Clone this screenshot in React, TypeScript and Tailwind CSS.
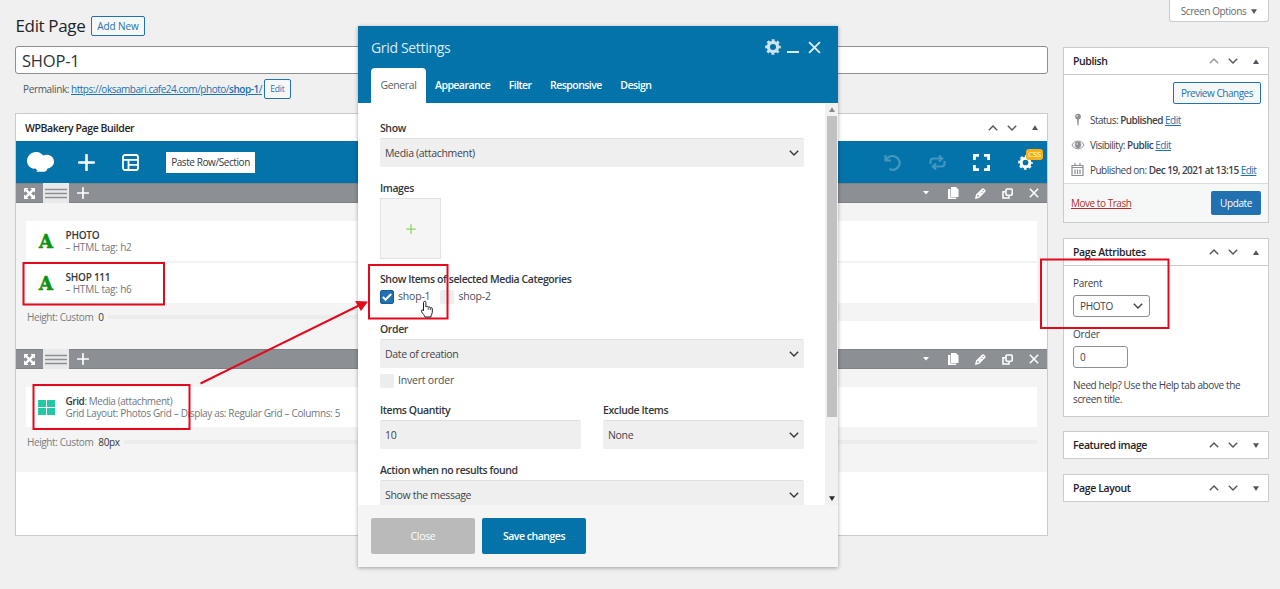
import type { ReactNode } from "react";
import { clsx } from "clsx";

const RED = "#e3091c";

// ---------- icons ----------

function Chevron({ up, className }: { up?: boolean; className?: string }) {
  return (
    <svg width="10" height="6" viewBox="0 0 10 6" fill="none" stroke="currentColor" strokeWidth="1.4" className={className}>
      <path d={up ? "M.8 5.3 5 1.1l4.2 4.2" : "M.8.7 5 4.9 9.2.7"} />
    </svg>
  );
}

function Triangle({ up }: { up?: boolean }) {
  return (
    <svg width="6" height="5" viewBox="0 0 6 5" fill="currentColor">
      <path d={up ? "M3 .2 6 5H0z" : "M0 .2h6L3 5z"} />
    </svg>
  );
}

function Gear({ size, color }: { size: number; color: string }) {
  return (
    <svg width={size} height={size} viewBox="0 0 20 20" fill="none" stroke={color}>
      <circle cx="10" cy="10" r="5.8" strokeWidth="4" />
      <circle cx="10" cy="10" r="8.3" strokeWidth="3" strokeDasharray="3.5 3.02" strokeDashoffset="1.75" />
    </svg>
  );
}

function Cross({ size }: { size: number }) {
  return (
    <svg width={size} height={size} viewBox="0 0 12 12" stroke="currentColor" strokeWidth="1.8">
      <path d="M1 1l10 10M11 1 1 11" />
    </svg>
  );
}

function Plus({ size, width }: { size: number; width: number }) {
  return (
    <svg width={size} height={size} viewBox="0 0 16 16" stroke="currentColor" strokeWidth={width} strokeLinecap="round">
      <path d="M8 1v14M1 8h14" />
    </svg>
  );
}

// ---------- shared bits ----------

function BoxArrows({ open, dim }: { open: boolean; dim?: boolean }) {
  return (
    <div className="flex items-center text-[#50575e]">
      <Chevron up className={clsx("mr-[9px]", dim && "opacity-60")} />
      <Chevron className="mr-[15px]" />
      <Triangle up={open} />
    </div>
  );
}

function MetaBox({ title, open = true, dim, children }: { title: string; open?: boolean; dim?: boolean; children?: ReactNode }) {
  return (
    <section className="border border-[#c9cbce] bg-white">
      <header className={clsx("flex h-[26px] items-center justify-between pl-[9px] pr-[9px]", open && "border-b border-[#c9cbce] box-content")}>
        <h2 className="pt-px text-[10.5px] font-semibold tracking-[-0.38px] text-[#1d2327]">{title}</h2>
        <BoxArrows open={open} dim={dim} />
      </header>
      {children}
    </section>
  );
}

function RowBar() {
  return (
    <div className="flex h-5 items-stretch justify-between border-y border-[#7e8287] bg-[#8c8f94] text-white">
      <div className="flex">
        <div className="flex w-[27px] items-center justify-center">
          <svg width="11" height="11" viewBox="0 0 11 11" fill="currentColor">
            <path d="M0 0h4.5L3.2 1.5l2.3 2.3 2.3-2.3L6.5 0H11v4.5L9.5 3.2 7.2 5.5l2.3 2.3L11 6.5V11H6.5l1.3-1.5-2.3-2.3-2.3 2.3L4.5 11H0V6.5l1.5 1.3 2.3-2.3-2.3-2.3L0 4.5z" />
          </svg>
        </div>
        <div className="-my-px flex w-[26px] items-center justify-center bg-[#e9e9e9]">
          <svg width="22" height="11" viewBox="0 0 22 11" stroke="#8c8f94" strokeWidth="1.4">
            <path d="M0 1.5h22M0 5.5h22M0 9.5h22" />
          </svg>
        </div>
        <div className="flex w-7 items-center justify-center">
          <Plus size={12} width={2.2} />
        </div>
      </div>
      <div className="flex items-center pr-[8px]">
        <svg width="6" height="4" viewBox="0 0 6 4" fill="currentColor" className="mr-[19px]">
          <path d="M0 0h6L3 3.5z" />
        </svg>
        <svg width="11" height="12" viewBox="0 0 11 12" fill="currentColor" className="mr-4">
          <path d="M3 0h5l2.500 2.500v7.500H3z" />
          <path d="M0 2h2.400v8.500h5.800V12H0z" />
        </svg>
        <svg width="11" height="11" viewBox="0 0 11 11" fill="none" stroke="currentColor" strokeWidth="1.5" className="mr-4">
          <path d="M1 10l.7-3L7.5 1.2c.7-.7 2.8 1.3 2.2 2L4 9.2zM6.5 2.5 8.5 4.5M3.5 7.5l3-3" />
        </svg>
        <svg width="11" height="11" viewBox="0 0 11 11" fill="none" stroke="currentColor" strokeWidth="1.6" className="mr-4">
          <rect x="4" y="1" width="6.2" height="6.2" rx="1" />
          <path d="M3.5 3.8H1v6.2h6V7.5" />
        </svg>
        <Cross size={10} />
      </div>
    </div>
  );
}

function TextElement({ title, tag }: { title: string; tag: string }) {
  return (
    <div className="flex h-10 shrink-0 items-center bg-white pl-[13px]">
      <span className="w-[26.5px] pt-px font-['DejaVu_Serif',serif] text-[18px] font-bold leading-none text-[#0c9311] [-webkit-text-stroke:0.6px]">A</span>
      <div className="text-[10px] leading-3">
        <p className="font-semibold tracking-[-0.25px] text-[#32373c]">{title}</p>
        <p className="tracking-[-0.2px] text-[#72777c]">– HTML tag: {tag}</p>
      </div>
    </div>
  );
}

function HeightLine({ value, className }: { value: string; className?: string }) {
  return (
    <div className={clsx("flex h-4 shrink-0 items-center pl-px text-[10px] tracking-[-0.4px] text-[#777c81]", className)}>
      <span>Height: Custom</span>
      <span className="ml-[5px] mr-1 text-[#32373c]">{value}</span>
      <span className="h-1 flex-1 bg-[#ececec]" />
    </div>
  );
}

// ---------- left column ----------

function Toolbar() {
  return (
    <div className="flex h-[42px] items-center bg-[#0473aa] pl-[11px] pr-[14px] text-white">
      <svg width="27" height="20" viewBox="0 0 27 20" fill="currentColor">
        <path d="M9 0c4 0 6 2 7 3.5C21 1.5 27 4 27 9.5c0 4-3 6.5-6.5 7-.5 1.8-1.5 3-3 3.2H10c-.8 0-.5-1 1-1.7C10 18.3 9 17.5 8.5 16.5 4 17.5 0 13.500 0 9c0-5 4-9 9-9z" />
      </svg>
      <span className="ml-6"><Plus size={17} width={2.4} /></span>
      <svg width="17" height="17" viewBox="0 0 17 17" fill="none" stroke="currentColor" strokeWidth="1.8" className="ml-[27px]">
        <rect x="1" y="1" width="15" height="15" rx="2" />
        <path d="M1 5.8h15M6.5 5.8V16M6.5 10.8H16" />
      </svg>
      <button className="ml-[27px] h-[21px] w-[89px] bg-white text-[10px] tracking-[-0.42px] text-[#32373c]">Paste Row/Section</button>
      <div className="ml-auto flex items-center">
        <svg width="17" height="17" viewBox="0 0 17 17" fill="none" stroke="currentColor" strokeWidth="2.2" className="mr-7 opacity-25">
          <path d="M1.5 1v5.5H7M2 6c2-4 6.5-5 10-3s4.8 6 2.6 9.4C12.500 15.6 9 16.4 5.5 15" />
        </svg>
        <svg width="17" height="15" viewBox="0 0 17 15" fill="none" stroke="currentColor" strokeWidth="2.2" className="mr-[27px] opacity-25">
          <path d="M1.5 9V6.5c0-2 1-3 3-3H13M15.5 6v2.5c0 2-1 3-3 3H4M10 .5l3.2 3L10 6.5M7 8.5l-3.2 3 3.2 3" />
        </svg>
        <svg width="17" height="17" viewBox="0 0 17 17" fill="none" stroke="currentColor" strokeWidth="2.8" className="mr-[28px]">
          <path d="M1.4 6V1.4H6M11 1.4h4.6V6M15.6 11v4.6H11M6 15.6H1.4V11" />
        </svg>
        <div className="relative">
          <Gear size={15} color="#fff" />
          <span className="absolute -top-[6px] left-[8px] flex h-[11px] w-[17px] items-center justify-center rounded-[3px] bg-[#fbb013] text-[8px] tracking-[-0.3px]">
            CSS
          </span>
        </div>
      </div>
    </div>
  );
}

function Builder() {
  return (
    <section className="mt-[14px] h-[423px] border border-[#c9cbce] bg-white">
      <header className="flex h-[27px] items-center justify-between pl-[9px] pr-[9px]">
        <h2 className="pt-[2px] text-[10.5px] font-semibold tracking-[-0.42px] text-[#1d2327]">WPBakery Page Builder</h2>
        <BoxArrows open />
      </header>
      <Toolbar />

      {/* heading row */}
      <RowBar />
      <div className="flex h-[118px] flex-col gap-[2px] bg-[#f4f4f4] px-[10px] pt-[18px]">
        <TextElement title="PHOTO" tag="h2" />
        <TextElement title="SHOP 111" tag="h6" />
        <HeightLine value="0" className="mt-[4px] w-[500px]" />
      </div>
      <div className="h-[28px] w-[500px] bg-[#f4f4f4]" />

      {/* grid row */}
      <RowBar />
      <div className="h-[103px] bg-[#f4f4f4] px-[10px] pt-[18px]">
        <div className="flex h-10 items-center bg-white pl-3">
          <svg width="17" height="15" viewBox="0 0 17 15" fill="#22c9a4" className="mr-[10.5px]">
            <path d="M0 0h8v7H0zM9 0h8v7H9zM0 8h8v7H0zM9 8h8v7H9z" />
          </svg>
          <div className="text-[10px] leading-3 tracking-[-0.35px] text-[#72777c]">
            <p className="tracking-[-0.42px]"><span className="font-semibold text-[#32373c]">Grid</span>: Media (attachment)</p>
            <p>Grid Layout: Photos Grid – Display as: Regular Grid – Columns: 5</p>
          </div>
        </div>
        <HeightLine value="80px" className="mt-[7px]" />
      </div>
    </section>
  );
}

function EditorColumn() {
  return (
    <main className="w-[1033px] pt-[15px]">
      <div className="flex h-[21px] items-center">
        <h1 className="w-[76px] pl-[0.5px] text-[17px] tracking-[-0.35px] text-[#1d2327]">Edit Page</h1>
        <button className="h-[20px] w-[54px] rounded-[2px] border border-[#2271b1] bg-[#f6f7f7] pt-px text-[10px] font-medium tracking-[-0.1px] text-[#2271b1]">Add New</button>
      </div>
      <div className="mt-[10px] flex h-7 items-center rounded-[3px] border border-[#8c8f94] bg-white pl-[6px] pt-[2px] text-[16.5px] tracking-[-0.2px] text-[#2c3338]">SHOP-1</div>
      <div className="mt-[5px] flex h-5 items-center pl-2 text-[10px]">
        <span className="w-[48px] font-medium tracking-[-0.35px] text-[#50575e]">Permalink:</span>
        <a className="w-[193px] whitespace-nowrap tracking-[-0.47px] text-[#2271b1] underline">https://oksambari.cafe24.com/photo/<span className="font-semibold">shop-1</span>/</a>
        <button className="h-5 w-[27px] rounded-[2px] border border-[#2271b1] bg-[#f6f7f7] text-[8.5px] tracking-[-0.2px] text-[#2271b1]">Edit</button>
      </div>
      <Builder />
    </main>
  );
}

// ---------- right column ----------

function StatusLine({ icon, label, value }: { icon: ReactNode; label: string; value: string }) {
  return (
    <div className="flex h-[25px] items-center whitespace-nowrap">
      <span className="flex w-[19px] shrink-0 items-center text-[#8c8f94]">{icon}</span>
      <span className="pt-px tracking-[-0.52px]">{label}: <b className="font-semibold">{value}</b> <a className="text-[#2271b1] underline">Edit</a></span>
    </div>
  );
}

function Sidebar() {
  return (
    <aside className="flex w-[206px] flex-col text-[10px] tracking-[-0.38px] text-[#3c434a]">
      <div className="mb-[25px] flex h-[22px] w-[100px] items-center justify-center gap-[5px] self-end rounded-b-[3px] border border-t-0 border-[#c9cbce] bg-white pt-px tracking-[-0.4px] text-[#646970]">
        Screen Options <span className="text-[#50575e]"><Triangle /></span>
      </div>

      <MetaBox title="Publish" dim>
        <div className="px-[7px] pb-[1px] pt-[7px]">
          <button className="mb-[3px] ml-auto block h-[22px] w-[88px] rounded-[2px] border border-[#2271b1] bg-[#f6f7f7] text-[10px] tracking-[-0.47px] text-[#2271b1]">Preview Changes</button>
          <StatusLine
            label="Status"
            value="Published"
            icon={
              <svg width="14" height="13" viewBox="0 0 14 13" fill="currentColor">
                <circle cx="7" cy="3.6" r="2.9" />
                <circle cx="6.2" cy="3" r=".8" fill="#fff" />
                <path d="M6.1 6h1.8l-.4 6.5h-1z" />
              </svg>
            }
          />
          <StatusLine
            label="Visibility"
            value="Public"
            icon={
              <svg width="14" height="10" viewBox="0 0 13 10" fill="none" stroke="currentColor">
                <path d="M.5 5C3-.2 10-.2 12.5 5 10 10 3 10 .5 5z" />
                <circle cx="6.5" cy="4.8" r="2.8" fill="currentColor" />
                <circle cx="5.6" cy="4" r=".8" fill="#fff" stroke="none" />
              </svg>
            }
          />
          <StatusLine
            label="Published on"
            value="Dec 19, 2021 at 13:15"
            icon={
              <svg width="13" height="13" viewBox="0 0 13 13" fill="none" stroke="currentColor" strokeWidth="1.2">
                <path d="M1 2.500h11v10H1zM1 4.500h11M4 0v3M9 0v3M4 6.500v4.500M6.500 6.500v4.500M9 6.500v4.500" />
              </svg>
            }
          />
        </div>
        <footer className="flex h-[39px] items-center justify-between border-t border-[#dcdcde] bg-[#f6f7f7] px-[7px]">
          <a className="tracking-[-0.47px] text-[#b32d2e] underline">Move to Trash</a>
          <button className="h-6 w-[50px] rounded-[2px] bg-[#2271b1] text-[10px] font-medium text-white">Update</button>
        </footer>
      </MetaBox>

      <div className="mt-[15px]">
        <MetaBox title="Page Attributes">
          <div className="h-[150px] px-[9px] pt-[7px]">
            <p className="h-[22px] pt-[3px] font-medium tracking-[-0.3px]">Parent</p>
            <div className="flex h-[22px] w-[77px] items-center justify-between rounded-[3px] border border-[#8c8f94] bg-white px-[6px] tracking-[-0.3px]">
              PHOTO <Chevron />
            </div>
            <p className="mt-[9px] h-5 pt-px font-medium tracking-[-0.2px]">Order</p>
            <div className="flex h-[22px] w-[55px] items-center rounded-[3px] border border-[#8c8f94] bg-white px-[6px]">0</div>
            <p className="mt-[10px] leading-[14px]">Need help? Use the Help tab above the<br />screen title.</p>
          </div>
        </MetaBox>
      </div>
      <div className="mt-[14px]"><MetaBox title="Featured image" open={false} /></div>
      <div className="mt-[15px]"><MetaBox title="Page Layout" open={false} /></div>
    </aside>
  );
}

// ---------- settings dialog ----------

function Label({ children, className }: { children: ReactNode; className?: string }) {
  return <p className={clsx("flex h-5 items-center whitespace-nowrap pt-[2px] font-semibold tracking-[-0.4px] text-[#32373c]", className)}>{children}</p>;
}

function Field({ value, select = true }: { value: string; select?: boolean }) {
  return (
    <div className="flex h-[29px] items-center justify-between rounded-[2px] border-t border-[#e0e0e0] bg-[#efefef] px-[5px] text-[#3f444a]">
      <span className="pt-px">{value}</span>
      {select && <Chevron className="text-[#32373c]" />}
    </div>
  );
}

function Check({ label, checked }: { label: string; checked?: boolean }) {
  return (
    <label className="flex h-4 items-center gap-1">
      <span className={clsx("flex h-[14px] w-[14px] items-center justify-center rounded-[2px]", checked ? "border border-[#135e96] bg-[#2271b1]" : "bg-[#ededed]")}>
        {checked && (
          <svg width="10" height="8" viewBox="0 0 10 8" fill="none" stroke="#fff" strokeWidth="2">
            <path d="M.8 4l2.8 2.7L9.2 1" />
          </svg>
        )}
      </span>
      <span className="tracking-[-0.2px]">{label}</span>
    </label>
  );
}

const TABS = ["Appearance", "Filter", "Responsive", "Design"];

function SettingsDialog() {
  return (
    <div className="absolute left-[358px] top-[26px] flex h-[541px] w-[480px] flex-col bg-white text-[10.5px] tracking-[-0.32px] text-[#4a4f55] shadow-[0_1px_4px_rgba(0,0,0,0.35)]">
      <header className="h-[77px] bg-[#0473aa] pl-[13px] pr-[17px] text-white">
        <div className="flex h-[42px] items-center justify-between">
          <h3 className="text-[14px] tracking-[-0.33px] text-[#dcebf3]">Grid Settings</h3>
          <div className="flex items-center text-[#dcebf3]">
            <Gear size={16} color="#cfe4ef" />
            <span className="ml-[6px] mt-[10px] h-[1.5px] w-3 bg-[#dcebf3]" />
            <span className="ml-[9px]"><Cross size={13} /></span>
          </div>
        </div>
        <nav className="flex h-[35px] items-center gap-[18.5px] font-semibold tracking-[-0.55px]">
          <span className="-mr-[9.5px] flex h-full w-[55px] items-center justify-center rounded-t-[4px] bg-white pt-px font-normal tracking-[-0.4px] text-[#5a5f64]">General</span>
          {TABS.map((t) => (
            <span key={t} className="pt-px">{t}</span>
          ))}
        </nav>
      </header>

      <div className="flex h-[402px] overflow-hidden">
        <div className="w-[467px] pl-[22px] pr-[21px] pt-[15px]">
          <Label>Show</Label>
          <Field value="Media (attachment)" />

          <Label className="mt-[11px]">Images</Label>
          <div className="flex h-[61px] w-[61px] items-center justify-center border border-[#e2e2e2] bg-[#f5f5f5] text-[#88d65b]">
            <Plus size={10} width={2} />
          </div>

          <Label className="mt-[10px]">Show Items of selected Media Categories</Label>
          <div className="flex gap-[10px]">
            <Check label="shop-1" checked />
            <Check label="shop-2" />
          </div>

          <Label className="mt-[14px]">Order</Label>
          <Field value="Date of creation" />
          <div className="mt-[5px]"><Check label="Invert order" /></div>

          <div className="mt-[11px] grid grid-cols-2 gap-[22px]">
            <div>
              <Label>Items Quantity</Label>
              <Field value="10" select={false} />
            </div>
            <div>
              <Label>Exclude Items</Label>
              <Field value="None" />
            </div>
          </div>

          <Label className="mt-[11px]">Action when no results found</Label>
          <Field value="Show the message" />
        </div>

        {/* scrollbar */}
        <div className="flex w-[13px] flex-col items-center bg-[#f1f1f1] pb-1 pt-[4px]">
          <span className="flex text-[#8a8a8a]"><Triangle up /></span>
          <span className="mt-[4px] h-[301px] w-[10px] bg-[#c1c1c1]" />
          <span className="mt-auto flex text-[#2b2b2b]"><Triangle /></span>
        </div>
      </div>

      <footer className="flex h-[62px] items-start gap-[7px] bg-[#f5f5f5] pl-[13px] pt-[13px] font-semibold text-white">
        <button className="h-9 w-[104px] rounded-[2px] bg-[#bababa] pt-px font-medium">Close</button>
        <button className="h-9 w-[104px] rounded-[2px] bg-[#0473aa] pt-px tracking-[-0.48px]">Save changes</button>
      </footer>
    </div>
  );
}

// red frames, arrow and the pointer, drawn over everything
function Annotations() {
  return (
    <svg width="1280" height="589" viewBox="0 0 1280 589" fill="none" stroke={RED} strokeWidth="2" className="pointer-events-none absolute left-0 top-0">
      <rect x="23.5" y="263" width="140.5" height="41.5" />
      <rect x="33.5" y="385" width="156" height="44" />
      <rect x="369" y="265" width="78.5" height="53.500" />
      <rect x="1041" y="259.5" width="127.5" height="68.5" />
      <path d="M200.5 383.5 360 305" />
      <path d="M368 301.5 355 301l6 10z" fill={RED} stroke="none" />
      <path
        d="M423.5 302.5c0-1.600 2.400-1.600 2.400 0v4.500c.5-.9 2-.8 2.300.3.500-.7 1.900-.5 2.200.5.700-.5 1.900-.1 1.900 1v3.400c0 1.600-.9 2.400-1.300 3.600v1.200h-6c-.5-2-2.400-3.200-3.500-5.300-.8-1.500.8-2.400 2-.8z"
        fill="#fff"
        stroke="#1d1d2b"
        strokeWidth="1"
      />
      <path d="M428.2 307.5v2.2M430.3 308v2" stroke="#1d1d2b" strokeWidth=".8" />
    </svg>
  );
}

export default function App() {
  return (
    <div className="relative flex h-[589px] w-[1280px] gap-[15px] overflow-hidden bg-[#f0f0f0] pl-[15px] font-['Open_Sans','Noto_Sans',sans-serif]">
      <EditorColumn />
      <Sidebar />
      <SettingsDialog />
      <Annotations />
    </div>
  );
}
